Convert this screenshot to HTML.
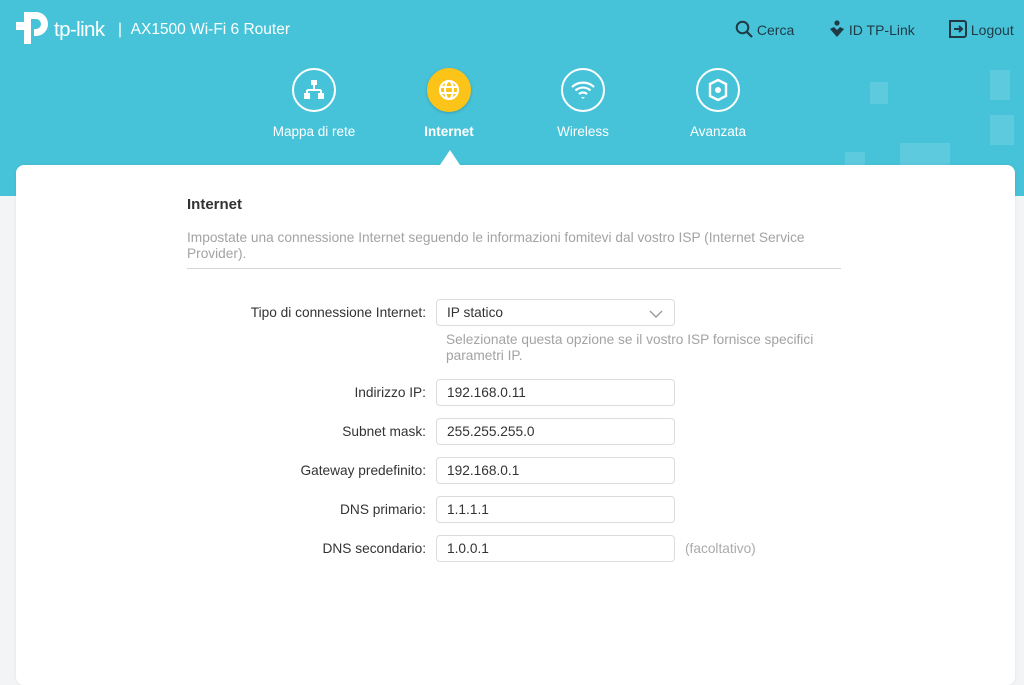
<!DOCTYPE html>
<html><head><meta charset="utf-8"><style>
*{margin:0;padding:0;box-sizing:border-box}
body{width:1024px;height:668px;overflow:hidden;background:#f3f4f5;font-family:"Liberation Sans",Arial,sans-serif;position:relative}
.top{position:absolute;left:0;top:0;width:1024px;height:196px;background:#47c3d9}
.deco{position:absolute;background:rgba(255,255,255,0.12)}
.logo{position:absolute;left:16px;top:10px;color:#fff}
.brand{position:absolute;left:54px;top:18px;color:#fff;font-size:20.5px;letter-spacing:-0.6px}
.model{position:absolute;left:118px;top:21px;color:#fff;font-size:15.5px}
.tr{position:absolute;top:20px;color:#1f3a44;font-size:14px}
.nav{position:absolute;top:68px;width:120px;text-align:center;color:#fff;font-size:13.5px}
.nav .c{width:44px;height:44px;border:2px solid #fff;border-radius:50%;margin:0 auto 12px;display:flex;align-items:center;justify-content:center}
.card{position:absolute;left:16px;top:165px;width:999px;height:520px;background:#fff;border-radius:8px;box-shadow:0 0 3px rgba(0,0,0,0.08)}
h2{position:absolute;left:187px;top:196px;font-size:15px;color:#333;font-weight:bold}
.desc{position:absolute;left:187px;top:230px;width:640px;font-size:13.7px;line-height:16px;color:#a3a3a3}
.hr{position:absolute;left:187px;top:268px;width:654px;height:1px;background:#d6d6d6}
.lbl{position:absolute;right:598px;font-size:13.7px;color:#333;text-align:right;white-space:nowrap}
.in{position:absolute;left:436px;width:239px;height:27px;border:1px solid #dcdcdc;border-radius:4px;font-size:13.7px;color:#333;padding:5px 0 0 10px}
.hint{position:absolute;left:446px;top:332px;font-size:13.7px;line-height:16px;color:#a3a3a3;width:390px}
</style></head><body>
<div class="top">
<div class="deco" style="left:870px;top:82px;width:18px;height:22px"></div>
<div class="deco" style="left:990px;top:70px;width:20px;height:30px"></div>
<div class="deco" style="left:990px;top:115px;width:24px;height:30px"></div>
<div class="deco" style="left:900px;top:143px;width:50px;height:25px"></div>
<div class="deco" style="left:845px;top:152px;width:20px;height:15px"></div>
</div>
<svg class="logo" width="38" height="36" viewBox="0 0 38 36"><path d="M20 2a12 12 0 0 1 0 24h-2v-7h2a5 5 0 0 0 0-10h-5v25h-7V2z" fill="#fff"/><rect x="0" y="12" width="8" height="8" fill="#fff"/></svg>
<div class="brand">tp-link</div>
<div class="model">| &nbsp;AX1500 Wi-Fi 6 Router</div>
<div class="tr" style="left:735px"><svg width="18" height="18" viewBox="0 0 18 18" style="vertical-align:-3px"><circle cx="7.5" cy="7.5" r="5.8" fill="none" stroke="#1f3a44" stroke-width="2"/><path d="M12 12l5 5" stroke="#1f3a44" stroke-width="2.2"/></svg> Cerca</div>
<div class="tr" style="left:829px"><svg width="16" height="18" viewBox="0 0 16 18" style="vertical-align:-3px"><circle cx="8" cy="3" r="2.6" fill="#1f3a44"/><path d="M1 9l7 8 7-8-4-2-3 3-3-3z" fill="#1f3a44"/></svg> ID TP-Link</div>
<div class="tr" style="left:949px"><svg width="18" height="18" viewBox="0 0 18 18" style="vertical-align:-3px"><path d="M1 1h14a2 2 0 0 1 2 2v12a2 2 0 0 1-2 2H1V1z" fill="none" stroke="#1f3a44" stroke-width="2"/><path d="M5 9h8M10 6l3 3-3 3" fill="none" stroke="#1f3a44" stroke-width="2"/></svg> Logout</div>
<div class="nav" style="left:254px"><div class="c"><svg width="22" height="20" viewBox="0 0 22 20"><rect x="8" y="0" width="6" height="5" fill="#fff"/><path d="M11 5v5M4 10h14M4 10v4M18 10v4" stroke="#fff" stroke-width="2" fill="none"/><rect x="1" y="13" width="6" height="6" fill="#fff"/><rect x="15" y="13" width="6" height="6" fill="#fff"/></svg></div>Mappa di rete</div>
<div class="nav" style="left:389px;font-weight:bold"><div class="c" style="background:#fcc419;border-color:#fcc419;box-shadow:0 1px 3px rgba(0,0,0,.2)"><svg width="22" height="22" viewBox="0 0 22 22"><circle cx="11" cy="11" r="9" fill="none" stroke="#fff" stroke-width="2"/><ellipse cx="11" cy="11" rx="4" ry="9" fill="none" stroke="#fff" stroke-width="2"/><path d="M2 8h18M2 14h18" stroke="#fff" stroke-width="2"/></svg></div>Internet</div>
<div class="nav" style="left:523px"><div class="c"><svg width="26" height="22" viewBox="0 0 26 22"><path d="M2 8a16 16 0 0 1 22 0M5.5 11.5a11 11 0 0 1 15 0M9 15a6 6 0 0 1 8 0" fill="none" stroke="#fff" stroke-width="2.2"/><path d="M11 18h4l-2 2z" fill="#fff"/></svg></div>Wireless</div>
<div class="nav" style="left:658px"><div class="c"><svg width="24" height="24" viewBox="0 0 24 24"><path d="M12 2l8 4v12l-8 4-8-4V6z" fill="none" stroke="#fff" stroke-width="2.4"/><circle cx="12" cy="12" r="3" fill="#fff"/></svg></div>Avanzata</div>
<div style="position:absolute;left:440px;top:150px;width:0;height:0;border-left:10px solid transparent;border-right:10px solid transparent;border-bottom:15px solid #fff;z-index:2"></div>
<div class="card"></div>
<h2>Internet</h2>
<div class="desc">Impostate una connessione Internet seguendo le informazioni fomitevi dal vostro ISP (Internet Service Provider).</div>
<div class="hr"></div>
<div class="lbl" style="top:305px">Tipo di connessione Internet:</div>
<div class="in" style="top:299px">IP statico<svg width="14" height="8" viewBox="0 0 14 8" style="position:absolute;right:11px;top:10px"><path d="M1 1l6 6 6-6" fill="none" stroke="#999" stroke-width="1.4"/></svg></div>
<div class="hint">Selezionate questa opzione se il vostro ISP fornisce specifici parametri IP.</div>
<div class="lbl" style="top:385px">Indirizzo IP:</div><div class="in" style="top:379px">192.168.0.11</div>
<div class="lbl" style="top:424px">Subnet mask:</div><div class="in" style="top:418px">255.255.255.0</div>
<div class="lbl" style="top:463px">Gateway predefinito:</div><div class="in" style="top:457px">192.168.0.1</div>
<div class="lbl" style="top:502px">DNS primario:</div><div class="in" style="top:496px">1.1.1.1</div>
<div class="lbl" style="top:541px">DNS secondario:</div><div class="in" style="top:535px">1.0.0.1</div>
<div style="position:absolute;left:685px;top:541px;font-size:13.7px;color:#aaa">(facoltativo)</div>
</body></html>
